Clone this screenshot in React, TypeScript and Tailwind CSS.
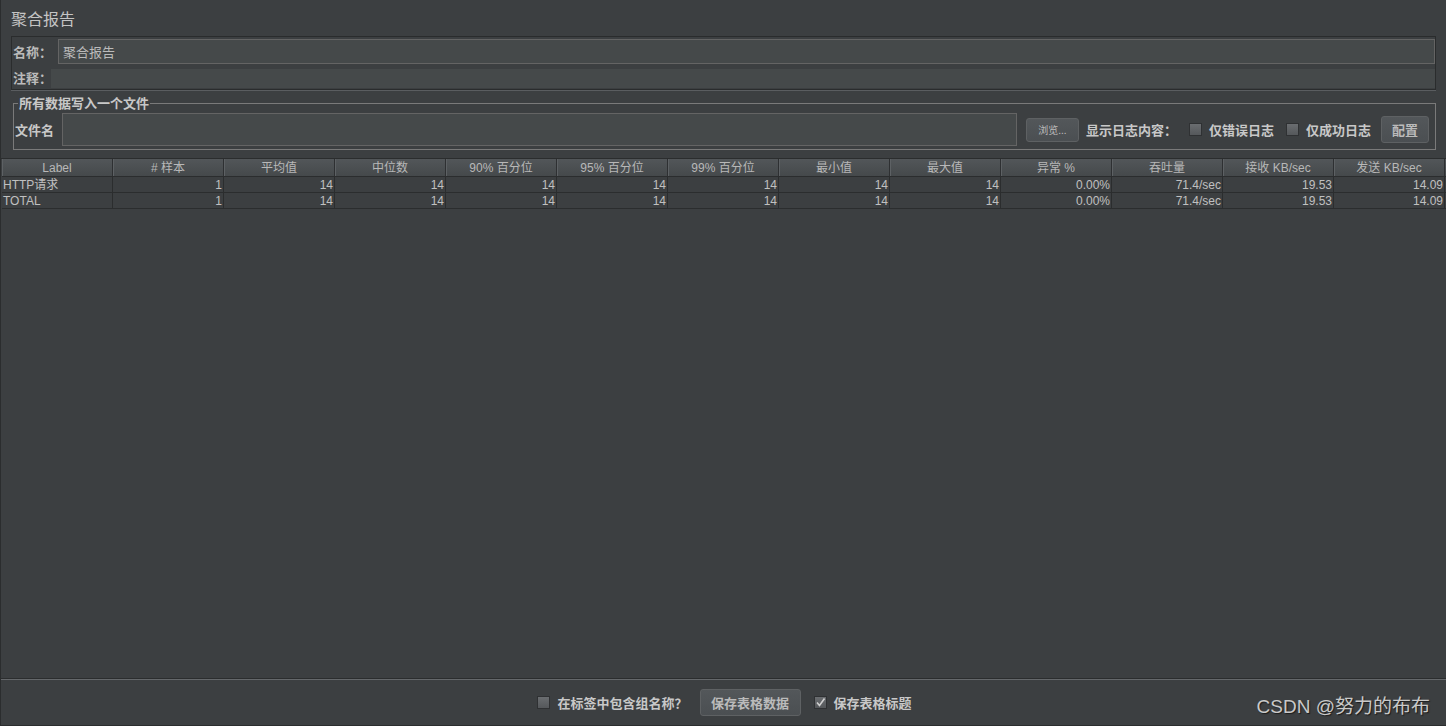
import React from "react";

const cols = ["Label", "# 样本", "平均值", "中位数", "90% 百分位", "95% 百分位", "99% 百分位", "最小值", "最大值", "异常 %", "吞吐量", "接收 KB/sec", "发送 KB/sec"];

const rows = [
    ["HTTP请求", "1", "14", "14", "14", "14", "14", "14", "14", "0.00%", "71.4/sec", "19.53", "14.09"],
    ["TOTAL", "1", "14", "14", "14", "14", "14", "14", "14", "0.00%", "71.4/sec", "19.53", "14.09"],
];

const CheckBox = ({ checked }: { checked?: boolean }) => (
    <div className="shrink-0 w-[13px] h-[13px] border border-[#2f3133] bg-gradient-to-b from-[#6a6d70] to-[#55585b] flex items-center justify-center">
        {checked && (
            <svg width="11" height="11" viewBox="0 0 11 11">
                <path d="M2 5.5 L4.5 8.5 L9.5 1.5" fill="none" stroke="#d0d0d0" strokeWidth="1.6" />
            </svg>
        )}
    </div>
);

const Button = ({ label, className }: { label: string; className: string }) => (
    <div
        className={
            "shrink-0 whitespace-nowrap flex items-center justify-center rounded-[3px] border border-[#5e6163] bg-gradient-to-b from-[#53575a] to-[#4b4f52] text-[#bbbbbb] " +
            className
        }
    >
        {label}
    </div>
);

const App = () => {
    return (
        <div
            className="relative w-[1446px] h-[726px] bg-[#3c3f41] border-l border-[#2b2d2e] flex flex-col text-[#bbbbbb] overflow-hidden"
            style={{ fontFamily: '"Noto Sans CJK SC", "Liberation Sans", sans-serif' }}
        >
            {/* title */}
            <div className="h-[36px] pl-[10px] pt-[7px] text-[16px] leading-[22px] text-[#c4c4c4]">聚合报告</div>

            {/* name / comment */}
            <div className="ml-[10px] mr-[10px] h-[54px] border border-[#2a2c2d] shadow-[0_1px_0_#5a5d60] flex flex-col pt-[2px] pb-[1px]">
                <div className="h-[25px] flex items-center">
                    <div className="w-[46px] shrink-0 whitespace-nowrap pl-[1px] text-[13px] font-bold">名称：</div>
                    <div className="flex-1 h-[25px] bg-[#45494a] border border-[#646464] flex items-center px-[4px] text-[13px] text-[#bbbbbb]">
                        聚合报告
                    </div>
                </div>
                <div className="flex-1 mt-[5px] flex items-center">
                    <div className="w-[39px] shrink-0 whitespace-nowrap pl-[1px] text-[13px] font-bold leading-[14px] -mt-[2px]">注释：</div>
                    <div className="flex-1 h-full bg-[#45494a]"></div>
                </div>
            </div>

            {/* file fieldset */}
            <fieldset className="ml-[12px] mr-[10px] mt-[6px] h-[54px] min-w-0 border border-[#7a7a7a] pl-[1px] pr-[6px]">
                <legend className="ml-[3px] px-[1px] text-[13px] font-bold leading-[14px] text-[#c8c8c8] whitespace-nowrap">所有数据写入一个文件</legend>
                <div className="flex items-center w-full mt-[3px]">
                    <div className="w-[47px] shrink-0 whitespace-nowrap text-[13px] font-bold text-[#c8c8c8]">文件名</div>
                    <div className="flex-1 min-w-0 h-[33px] bg-[#45494a] border border-[#646464]"></div>
                    <Button label="浏览..." className="ml-[9px] w-[53px] h-[24px] text-[10px]" />
                    <div className="ml-[7px] whitespace-nowrap text-[13px] font-bold text-[#c8c8c8]">显示日志内容：</div>
                    <div className="ml-[12px]">
                        <CheckBox />
                    </div>
                    <div className="ml-[7px] whitespace-nowrap text-[13px] font-bold text-[#c8c8c8]">仅错误日志</div>
                    <div className="ml-[12px]">
                        <CheckBox />
                    </div>
                    <div className="ml-[7px] whitespace-nowrap text-[13px] font-bold text-[#c8c8c8]">仅成功日志</div>
                    <Button label="配置" className="ml-[10px] w-[48px] h-[27px] text-[13px] font-bold" />
                </div>
            </fieldset>

            {/* table */}
            <div
                className="mt-[8px] flex-1 border-t border-b border-[#2b2d2e] pl-[1px] flex flex-col text-[12px]"
                style={{ fontFamily: '"Liberation Sans", "Noto Sans CJK SC", sans-serif' }}
            >
                <div className="grid grid-cols-[repeat(13,111px)] h-[18px] bg-gradient-to-b from-[#525659] to-[#45494b] border-b border-[#2b2d2e]">
                    {cols.map((c) => (
                        <div key={c} className="border-r border-[#2e3032] shadow-[inset_1px_0_0_#5d6164] flex items-center justify-center leading-none text-[#b8b8b8] whitespace-nowrap">
                            {c}
                        </div>
                    ))}
                </div>
                {rows.map((r, i) => (
                    <div key={i} className="grid grid-cols-[repeat(13,111px)] h-[16px] border-b border-[#2b2d2e]">
                        {r.map((v, j) => (
                            <div
                                key={j}
                                className={
                                    "border-r border-[#2b2d2e] flex items-center leading-none px-[1px] text-[#c0c0c0] whitespace-nowrap " +
                                    (j === 0 ? "justify-start" : "justify-end")
                                }
                            >
                                {v}
                            </div>
                        ))}
                    </div>
                ))}
            </div>

            {/* bottom panel */}
            <div className="h-[47px] border-t border-[#65686b] border-b border-b-[#2b2d2e] flex items-center justify-center pl-[2px]">
                <CheckBox />
                <div className="ml-[7px] whitespace-nowrap text-[13px] font-bold text-[#c8c8c8]">在标签中包含组名称？</div>
                <Button label="保存表格数据" className="ml-[12px] w-[101px] h-[27px] text-[13px] font-bold" />
                <div className="ml-[13px]">
                    <CheckBox checked />
                </div>
                <div className="ml-[7px] whitespace-nowrap text-[13px] font-bold text-[#c8c8c8]">保存表格标题</div>
            </div>

            <div
                className="absolute right-[16px] bottom-[5px] text-[19px] text-[#c9c9c9] whitespace-nowrap [text-shadow:1px_1px_1px_#1c1c1c]"
                style={{ fontFamily: '"Liberation Sans", "Noto Sans CJK SC", sans-serif' }}
            >
                CSDN @努力的布布
            </div>
        </div>
    );
};

export default App;
